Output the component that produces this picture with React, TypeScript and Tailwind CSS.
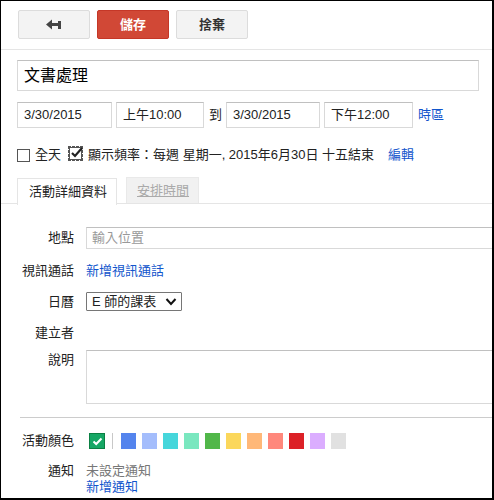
import React from 'react';

const swatches = [
  '#5484ed',
  '#a4bdfc',
  '#46d6db',
  '#7ae7bf',
  '#51b749',
  '#fbd75b',
  '#ffb878',
  '#ff887c',
  '#dc2127',
  '#dbadff',
  '#e1e1e1',
];

function BackArrow() {
  return (
    <svg width="16" height="11" viewBox="0 0 16 11" className="text-[#444]">
      <polygon points="0,5.5 6,0.5 6,10.5" fill="currentColor" />
      <rect x="5" y="4" width="9" height="3" fill="currentColor" />
      <rect x="12" y="2" width="3" height="8" fill="currentColor" />
    </svg>
  );
}

function Checkbox({ checked, focused }: { checked?: boolean; focused?: boolean }) {
  return (
    <span
      className={
        focused
          ? 'inline-flex items-center justify-center w-[15px] h-[15px] border border-dashed border-[#555]'
          : 'inline-flex items-center justify-center w-[13px] h-[13px]'
      }
    >
      <span className="relative w-[13px] h-[13px] border border-[#555] bg-white">
        {checked && (
          <svg width="15" height="13" viewBox="0 0 15 13" className="absolute -top-[2px] left-[0px]">
            <polyline points="2,7 5,10 12,2" fill="none" stroke="#222" strokeWidth="2.2" />
          </svg>
        )}
      </span>
    </span>
  );
}

function Row({ label, children, className = '' }: { label: string; children?: React.ReactNode; className?: string }) {
  return (
    <div className={'flex ' + className}>
      <div className="w-[73px] shrink-0 text-right text-[#222]">{label}</div>
      <div className="ml-[12px] flex-1">{children}</div>
    </div>
  );
}

export default function App() {
  return (
    <div
      className="w-[494px] h-[500px] overflow-hidden bg-white border-l border-t border-r-2 border-b-2 border-black text-[13px] leading-[16px] text-[#222]"
      style={{ fontFamily: '"Liberation Sans", Arial, "Noto Sans CJK TC", sans-serif' }}
    >
      {/* Toolbar */}
      <div className="flex pl-[17px] pt-[9px] pb-[10px] gap-[7px] border-b border-[#e5e5e5]">
        <button className="w-[72px] h-[29px] flex items-center justify-center rounded-[2px] border border-[#dcdcdc] bg-[#f3f3f3]">
          <BackArrow />
        </button>
        <button className="w-[72px] h-[29px] flex items-center justify-center rounded-[2px] border border-[#c53727] bg-[#d14836] text-white font-bold text-[13px]">
          儲存
        </button>
        <button className="w-[72px] h-[29px] flex items-center justify-center rounded-[2px] border border-[#dcdcdc] bg-[#f3f3f3] text-[#333] font-bold text-[13px]">
          捨棄
        </button>
      </div>

      {/* Title */}
      <div className="mt-[10px] ml-[16px] w-[462px] h-[31px] flex items-center pl-[6px] border border-[#d9d9d9] border-t-[#c0c0c0] text-[16px] text-black">
        文書處理
      </div>

      {/* Date/time */}
      <div className="mt-[11px] ml-[16px] flex items-center h-[26px]">
        <div className="w-[95px] h-[26px] flex items-center pl-[6px] border border-[#d9d9d9] border-t-[#c0c0c0]">3/30/2015</div>
        <div className="ml-[4px] w-[88px] h-[26px] flex items-center pl-[6px] border border-[#d9d9d9] border-t-[#c0c0c0]">上午10:00</div>
        <div className="ml-[5px] w-[17px]">到</div>
        <div className="w-[94px] h-[26px] flex items-center pl-[6px] border border-[#d9d9d9] border-t-[#c0c0c0]">3/30/2015</div>
        <div className="ml-[4px] w-[89px] h-[26px] flex items-center pl-[6px] border border-[#d9d9d9] border-t-[#c0c0c0]">下午12:00</div>
        <a className="ml-[5px] text-[#1155cc]">時區</a>
      </div>

      {/* Checkboxes */}
      <div className="mt-[19px] ml-[16px] flex items-center h-[16px]">
        <Checkbox />
        <span className="ml-[5px]">全天</span>
        <span className="ml-[7px]">
          <Checkbox checked focused />
        </span>
        <span className="ml-[5px]">顯示頻率：每週 星期一, 2015年6月30日 十五結束</span>
        <a className="ml-[14px] text-[#1155cc]">編輯</a>
      </div>

      {/* Tabs */}
      <div className="mt-[14px] flex pl-[16px] border-b border-[#e5e5e5] h-[27px]">
        <div className="w-[100px] h-[27px] pl-[11px] flex items-center border border-b-0 border-[#e5e5e5] bg-white text-[#222] relative top-[1px]">
          活動詳細資料
        </div>
        <div className="ml-[9px] w-[73px] h-[26px] pl-[10px] flex items-center border border-b-0 border-[#e9e9e9] bg-[#f1f1f1] text-[#aaa] underline">
          安排時間
        </div>
      </div>

      {/* Form */}
      <Row label="地點" className="mt-[23px] items-center">
        <div className="w-[420px] h-[22px] flex items-center pl-[5px] border border-[#d9d9d9] border-t-[#c0c0c0] text-[#999]">
          輸入位置
        </div>
      </Row>

      <Row label="視訊通話" className="mt-[14px]">
        <a className="text-[#1155cc]">新增視訊通話</a>
      </Row>

      <Row label="日曆" className="mt-[13px] items-center">
        <div className="w-[96px] h-[19px] flex items-center justify-between pl-[5px] pr-[4px] border border-[#767676] rounded-[1px]">
          <span>E 師的課表</span>
          <svg width="12" height="9" viewBox="0 0 12 9">
            <polyline points="1.5,2 6,7 10.5,2" fill="none" stroke="#111" strokeWidth="2" />
          </svg>
        </div>
      </Row>

      <Row label="建立者" className="mt-[14px]" />

      <Row label="說明" className="mt-[11px]">
        <div className="w-[420px] h-[54px] border border-[#d9d9d9] border-t-[#c0c0c0] -mt-[2px]" />
      </Row>

      <div className="mt-[13px] ml-[19px] border-t border-[#cccccc]" />

      {/* Colours */}
      <Row label="活動顏色" className="mt-[15px] items-center">
        <div className="flex items-center h-[16px] ml-[3px]">
          <div className="w-[16px] h-[16px] bg-[#16a765] border border-[#0b8043] flex items-center justify-center">
            <svg width="11" height="9" viewBox="0 0 11 9">
              <polyline points="1.5,4.5 4.2,7 9.5,1.5" fill="none" stroke="white" strokeWidth="2" />
            </svg>
          </div>
          <div className="ml-[7px] w-[1px] h-[16px] bg-[#c8c8c8]" />
          <div className="ml-[8px] flex gap-[6px]">
            {swatches.map((c) => (
              <div key={c} className="w-[15px] h-[16px]" style={{ backgroundColor: c }} />
            ))}
          </div>
        </div>
      </Row>

      <Row label="通知" className="mt-[14px]">
        <div className="text-[#777]">未設定通知</div>
        <a className="text-[#1155cc]">新增通知</a>
      </Row>
    </div>
  );
}
